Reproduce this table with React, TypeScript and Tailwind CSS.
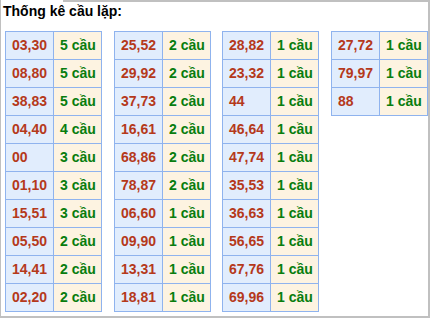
import React from 'react';

type Row = [string, number];

const TABLES: Row[][] = [
  [
    ['03,30', 5], ['08,80', 5], ['38,83', 5], ['04,40', 4], ['00', 3],
    ['01,10', 3], ['15,51', 3], ['05,50', 2], ['14,41', 2], ['02,20', 2],
  ],
  [
    ['25,52', 2], ['29,92', 2], ['37,73', 2], ['16,61', 2], ['68,86', 2],
    ['78,87', 2], ['06,60', 1], ['09,90', 1], ['13,31', 1], ['18,81', 1],
  ],
  [
    ['28,82', 1], ['23,32', 1], ['44', 1], ['46,64', 1], ['47,74', 1],
    ['35,53', 1], ['36,63', 1], ['56,65', 1], ['67,76', 1], ['69,96', 1],
  ],
  [['27,72', 1], ['79,97', 1], ['88', 1]],
];

const MARGINS = ['ml-[4px]', 'ml-[12px]', 'ml-[11px]', 'ml-[12px]'];

function CauTable({ rows, className }: { rows: Row[]; className: string }) {
  return (
    <div className={`w-[97px] self-start border border-[#8fb3ee] ${className}`}>
      {rows.map(([pair, count], i) => (
        <div
          key={pair}
          className={`flex h-[27px] ${i < rows.length - 1 ? 'h-[28px] border-b border-[#8fb3ee]' : ''}`}
        >
          {/* Pair */}
          <div className="w-[48px] border-r border-[#8fb3ee] bg-[#e1edfd] flex items-center pl-[6px] text-[#b5391b]">
            {pair}
          </div>
          {/* Count */}
          <div className="flex-1 bg-[#fdf3e1] flex items-center pl-[6px] text-[#087d0e]">
            {count} cầu
          </div>
        </div>
      ))}
    </div>
  );
}

export default function App() {
  return (
    <div
      className="w-[430px] h-[318px] bg-white border-l border-r-2 border-b-2 border-[#c0c0c0] flex flex-col"
      style={{ fontFamily: '"Liberation Sans", Arial, sans-serif' }}
    >
      {/* Top rule */}
      <div className="flex h-[2px]">
        <div className="w-[62px]" />
        <div className="flex-1 bg-[#c0c0c0]" />
      </div>

      <div className="pt-[1px] pl-[2px] h-[16px] leading-[16px] text-[14px] font-bold text-black box-content">
        Thống kê cầu lặp:
      </div>

      <div className="flex mt-[12px] text-[14px] font-bold">
        {TABLES.map((rows, i) => (
          <CauTable key={i} rows={rows} className={MARGINS[i]} />
        ))}
      </div>
    </div>
  );
}
